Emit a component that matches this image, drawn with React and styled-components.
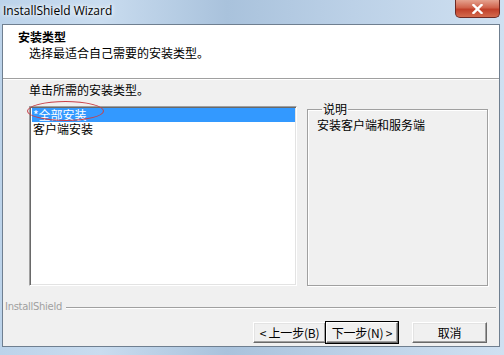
import React from 'react';
import styled, { createGlobalStyle } from 'styled-components';

const GlobalStyle = createGlobalStyle`
    html, body {
        margin: 0;
        padding: 0;
        background: #fff;
    }
    body {
        font-family: 'Noto Sans CJK SC', 'Liberation Sans', sans-serif;
        font-size: 12px;
    }
`;

const Window = styled.div`
    width: 504px;
    height: 355px;
    display: flex;
    flex-direction: column;
    box-sizing: border-box;
    background: linear-gradient(90deg, #bcd3ea 0%, #c9dcef 20%, #a9c2dc 45%, #bcd1e7 70%, #cfe0f1 100%);
    overflow: hidden;
`;

const TitleBar = styled.div`
    height: 24px;
    display: flex;
    justify-content: space-between;
    align-items: flex-start;
    flex-shrink: 0;
`;

const Title = styled.div`
    font-family: 'Open Sans', 'Liberation Sans', sans-serif;
    font-size: 12px;
    line-height: 14px;
    color: #000;
    padding: 4px 0 0 3px;
    text-shadow: 0 0 6px #fff, 0 0 4px #fff;
`;

const CloseButton = styled.div`
    width: 45px;
    height: 18px;
    margin-right: 4px;
    box-sizing: border-box;
    border: 1px solid #6d2a24;
    border-top: none;
    border-radius: 0 0 5px 5px;
    background: linear-gradient(180deg, #e5a28f 0%, #d0634c 45%, #c0402a 55%, #d46b4e 100%);
    display: flex;
    align-items: center;
    justify-content: center;
`;

const Client = styled.div`
    flex: 1;
    margin: 0 4px 8px 2px;
    background: #f0f0f0;
    border: 1px solid #6f7f90;
    display: flex;
    flex-direction: column;
    position: relative;
`;

const Header = styled.div`
    height: 54px;
    background: #fff;
    border-bottom: 1px solid #a0a0a0;
    box-shadow: 0 1px 0 #fff;
    padding: 4px 0 0 15px;
    box-sizing: border-box;
`;

const HeaderTitle = styled.div`
    font-weight: bold;
    line-height: 16px;
    color: #000;
`;

const HeaderSub = styled.div`
    padding-left: 11px;
    line-height: 16px;
    color: #000;
`;

const Body = styled.div`
    padding: 3px 0 0 26px;
    display: flex;
    flex-direction: column;
`;

const Prompt = styled.div`
    line-height: 16px;
    color: #000;
`;

const Row = styled.div`
    display: flex;
    align-items: flex-end;
    margin-top: 5px;
`;

const List = styled.div`
    width: 268px;
    height: 180px;
    box-sizing: border-box;
    background: #fff;
    border-top: 1px solid #a0a0a0;
    border-left: 1px solid #a0a0a0;
    border-right: 1px solid #fff;
    border-bottom: 1px solid #fff;
    box-shadow: inset 1px 1px 0 #696969, inset -1px -1px 0 #e3e3e3;
    padding: 1px 1px 0 2px;
`;

const Item = styled.div`
    height: 14px;
    line-height: 14px;
    padding-left: 1px;
    color: ${p => (p.selected ? '#fff' : '#000')};
    background: ${p => (p.selected ? '#3399ff' : 'transparent')};
    white-space: nowrap;
`;

const Highlight = styled.div`
    position: absolute;
    left: 24px;
    top: 76px;
    width: 75px;
    height: 18px;
    border: 1px solid #c84048;
    border-radius: 50%;
    pointer-events: none;
`;

const Group = styled.fieldset`
    width: 181px;
    height: 183px;
    margin: 0 0 0 10px;
    padding: 0 0 0 9px;
    box-sizing: border-box;
    border: 1px solid #a0a0a0;
    box-shadow: 1px 1px 0 #fff, inset 1px 1px 0 #fff;
    border-radius: 0;
`;

const Legend = styled.legend`
    padding: 0 1px;
    margin-left: 5px;
    line-height: 12px;
    color: #000;
`;

const GroupText = styled.div`
    margin-top: 3px;
    line-height: 14px;
    color: #000;
`;

const Brand = styled.div`
    display: flex;
    align-items: center;
    margin-top: 15px;
    padding-left: 2px;
    padding-right: 3px;
`;

const BrandText = styled.span`
    font-family: 'DejaVu Sans', 'Liberation Sans', sans-serif;
    font-size: 10px;
    line-height: 12px;
    color: #a0a0a0;
    letter-spacing: -0.3px;
`;

const BrandLine = styled.div`
    flex: 1;
    height: 1px;
    margin-left: 4px;
    background: #a0a0a0;
    box-shadow: 0 1px 0 #fff;
`;

const Buttons = styled.div`
    display: flex;
    justify-content: flex-end;
    margin-top: 9px;
    padding-right: 12px;
`;

const Button = styled.div`
    width: ${p => p.w || 73}px;
    height: 21px;
    box-sizing: border-box;
    margin-left: ${p => p.gap || 0}px;
    display: flex;
    align-items: center;
    justify-content: center;
    background: #f0f0f0;
    color: #000;
    font-size: 12px;
    border-top: 1px solid #fff;
    border-left: 1px solid #fff;
    border-right: 1px solid #696969;
    border-bottom: 1px solid #696969;
    box-shadow: ${p =>
        p.primary
            ? '0 0 0 1px #000, inset -1px -1px 0 #a0a0a0'
            : 'inset -1px -1px 0 #a0a0a0, inset 1px 1px 0 #e3e3e3'};
    white-space: nowrap;
    letter-spacing: -0.2px;
`;

export default function App() {
    return (
        <>
            <GlobalStyle />
            <Window>
                <TitleBar>
                    <Title>InstallShield Wizard</Title>
                    <CloseButton>
                        <svg width="11" height="10" viewBox="0 0 11 10">
                            <path d="M1.5 1 L9.5 9 M9.5 1 L1.5 9" stroke="#fff" strokeWidth="2.4" strokeLinecap="square" />
                        </svg>
                    </CloseButton>
                </TitleBar>
                <Client>
                    <Header>
                        <HeaderTitle>安装类型</HeaderTitle>
                        <HeaderSub>选择最适合自己需要的安装类型。</HeaderSub>
                    </Header>
                    <Body>
                        <Prompt>单击所需的安装类型。</Prompt>
                        <Row>
                            <List>
                                <Item selected>*全部安装</Item>
                                <Item>客户端安装</Item>
                            </List>
                            <Group>
                                <Legend>说明</Legend>
                                <GroupText>安装客户端和服务端</GroupText>
                            </Group>
                        </Row>
                    </Body>
                    <Brand>
                        <BrandText>InstallShield</BrandText>
                        <BrandLine />
                    </Brand>
                    <Buttons>
                        <Button>&lt; 上一步(B)</Button>
                        <Button primary w={72}>下一步(N) &gt;</Button>
                        <Button gap={14} w={75}>取消</Button>
                    </Buttons>
                    <Highlight />
                </Client>
            </Window>
        </>
    );
}
